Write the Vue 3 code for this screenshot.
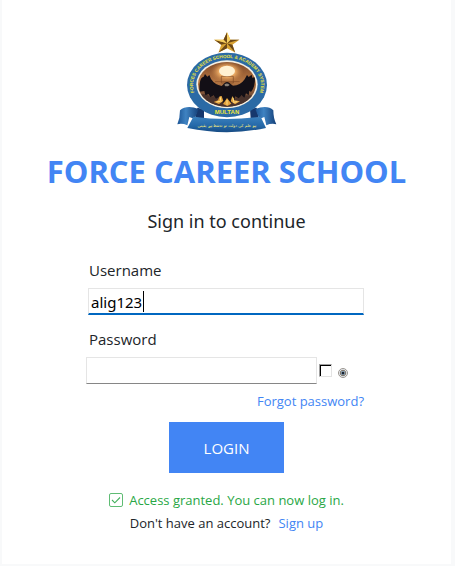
<script setup>
import { ref, watch, onMounted } from 'vue'

const username = ref('alig123')
const password = ref('')
const showPassword = ref(false)
const userInput = ref(null)
const caretX = ref(0)

// The caret sits right behind the typed text.
function placeCaret() {
  const style = getComputedStyle(userInput.value)
  const ctx = document.createElement('canvas').getContext('2d')
  ctx.font = `${style.fontSize} ${style.fontFamily}`
  caretX.value = Math.round(ctx.measureText(username.value).width) + 4
}

onMounted(placeCaret)
watch(username, placeCaret)
</script>

<template>
  <main class="page">
    <section class="card">
      <svg class="logo" viewBox="37 18 300 306" role="img" aria-label="Forces Career School crest">
        <defs>
          <linearGradient id="sky" x1="0" y1="0" x2="0" y2="1">
            <stop offset="0" stop-color="#7a4526" />
            <stop offset="0.45" stop-color="#b87843" />
            <stop offset="0.7" stop-color="#7d5238" />
            <stop offset="1" stop-color="#2a1a16" />
          </linearGradient>
          <radialGradient id="glow">
            <stop offset="0" stop-color="#fff3cf" />
            <stop offset="0.5" stop-color="#e9a862" />
            <stop offset="1" stop-color="#b87843" stop-opacity="0" />
          </radialGradient>
          <linearGradient id="ribbon" x1="0" y1="0" x2="0" y2="1">
            <stop offset="0" stop-color="#3b80bd" />
            <stop offset="0.6" stop-color="#2468a8" />
            <stop offset="1" stop-color="#174b83" />
          </linearGradient>
          <linearGradient id="curl" x1="0" y1="0" x2="1" y2="0">
            <stop offset="0" stop-color="#1c5596" />
            <stop offset="0.4" stop-color="#3f83c2" />
            <stop offset="1" stop-color="#143f78" />
          </linearGradient>
          <clipPath id="scene"><ellipse cx="187" cy="178" rx="87" ry="67" /></clipPath>
          <path id="arc" d="M90 205 A102 81 0 1 1 284 205" />
        </defs>
        <path d="M98 248 L118 253 L118 280 L92 278Z M276 248 L256 253 L258 280 L282 278Z" fill="#16376c" />
        <path d="M46 256 Q66 239 102 252 L90 282 L74 276 L68 301 Q52 294 38 298 Q46 280 46 256Z" fill="url(#curl)" />
        <path d="M326 256 Q308 239 272 252 L284 282 L299 276 L305 301 Q321 294 335 298 Q326 280 326 256Z" fill="url(#curl)" />
        <ellipse cx="187" cy="180" rx="120" ry="97" fill="#2b6aa5" />
        <ellipse cx="187" cy="178" rx="92" ry="72" fill="#f5efe2" />
        <g clip-path="url(#scene)">
          <rect x="98" y="108" width="178" height="140" fill="url(#sky)" />
          <ellipse cx="187" cy="140" rx="50" ry="33" fill="url(#glow)" />
          <path d="M170 154 H206 V174 H170Z M151 170 H225" fill="none" stroke="#7c4825" stroke-width="2" />
          <ellipse cx="187" cy="138" rx="24" ry="16" fill="#fff1d2" />
          <path d="M98 213 Q122 201 138 216 Q159 208 176 225 L206 224 Q238 204 278 215 V250 H98Z" fill="#4a332c" />
          <path d="M105 200 Q102 158 117 155 L121 147 L128 155 L134 150 L139 162 Q150 179 171 183 L180 174 Q189 167 198 177 L205 182 Q227 182 240 163 L247 150 L252 156 L261 149 L263 158 L271 156 Q272 186 259 201 L254 197 L252 211 L244 205 L239 218 L231 211 L222 220 L212 214 L207 232 L170 232 L164 215 L154 221 L147 211 L137 217 L132 207 L122 211 L119 198Z" fill="#130f16" />
          <path d="M179 179 Q187 172 195 180 L190 184 H182Z" fill="#8a8178" />
          <path d="M171 213 L176 228 L163 237 L147 231 L160 226 L165 214Z M203 213 L209 226 L226 229 L211 238 L198 229Z M181 228 L187 219 L194 228 L200 236 L188 243 L175 237Z" fill="#e4a33f" />
          <path d="M167 217 L169 231 M205 218 L207 230 M187 225 V239 M156 231 L166 229 M206 232 L218 230" stroke="#ffe28a" stroke-width="3" fill="none" />
        </g>
        <text class="motto"><textPath href="#arc" startOffset="50%" text-anchor="middle">FORCES CAREER SCHOOL &amp; ACADEMY SYSTEM</textPath></text>
        <text class="city" x="187" y="268" text-anchor="middle">MULTAN</text>
        <path d="M86 275 Q187 289 288 275 L304 309 Q187 334 68 309Z" fill="url(#ribbon)" />
        <text class="urdu" x="187" y="305" text-anchor="middle" direction="rtl">ہو علم کی دولت تو تحفظ ہے یقینی</text>
        <g transform="translate(187 22) scale(1.16 1.06) translate(-193 -23)">
          <path d="M193 23 L202 44 L225 44 L207 58 L214 80 L193 68 L171 80 L178 58 L160 44 L184 44Z" fill="#d9a334" />
          <path d="M193 23 V54 L184 44Z M160 44 L193 54 L178 58Z M171 80 L193 54 V68Z M214 80 L193 54 L207 58Z M225 44 L193 54 L202 44Z" fill="#6b4717" />
          <path d="M193 23 L202 44 L193 54Z M160 44 L184 44 L193 54Z" fill="#f6cf62" />
        </g>
      </svg>

      <h1 class="title">FORCE CAREER SCHOOL</h1>
      <p class="subtitle">Sign in to continue</p>

      <form class="form" @submit.prevent>
        <label class="label" for="username">Username</label>
        <div class="user-field">
          <input id="username" ref="userInput" v-model="username" class="input active" type="text" autocomplete="off" />
          <span class="caret" :style="{ left: caretX + 'px' }"></span>
        </div>

        <label class="label second" for="password">Password</label>
        <div class="password-row">
          <input id="password" v-model="password" class="input" :type="showPassword ? 'text' : 'password'" />
          <input id="show" v-model="showPassword" class="check" type="checkbox" />
          <label class="eye" for="show" aria-label="Show password">
            <svg viewBox="0 0 20 20" width="10" height="10" aria-hidden="true">
              <circle cx="10" cy="10" r="9" fill="#e9edf2" stroke="#9a958f" stroke-width="2" />
              <circle cx="10" cy="10" r="5.5" fill="#a9c3d8" stroke="#7d7263" stroke-width="2" />
              <circle cx="10" cy="10" r="3" fill="#17202e" />
            </svg>
          </label>
        </div>
        <a class="link forgot" href="#">Forgot password?</a>
        <button class="login" type="submit">LOGIN</button>
      </form>

      <p class="status">
        <svg viewBox="0 0 14 14" width="14" height="14" aria-hidden="true">
          <rect x="0.5" y="0.5" width="13" height="13" rx="1.5" fill="none" stroke="#5fbc74" />
          <path d="M3 7 L5.8 9.8 L11 4.5" fill="none" stroke="#45b05e" stroke-width="1.1" />
        </svg>
        <span>Access granted. You can now log in.</span>
      </p>
      <p class="signup">
        <span>Don't have an account?</span>
        <a class="link" href="#">Sign up</a>
      </p>
    </section>
  </main>
</template>

<style>
body {
  margin: 0;
  background: #f8f9fa;
}
</style>

<style scoped>
* {
  box-sizing: border-box;
}

.page {
  min-height: 100vh;
  display: flex;
  padding: 0 4px 2px 2px;
  font-family: "Open Sans", "Noto Sans", sans-serif;
  color: #212529;
}

.card {
  flex: 1;
  display: flex;
  flex-direction: column;
  align-items: center;
  padding-top: 31px;
  background: #fff;
}

.logo {
  width: 100px;
  height: 102px;
}

.motto,
.city {
  font-family: "Liberation Sans", sans-serif;
  font-weight: 700;
  fill: #f0e63a;
}

.motto {
  font-size: 14px;
}

.city {
  font-size: 18px;
}

.urdu {
  font-family: "DejaVu Sans", sans-serif;
  font-size: 12px;
  fill: #fff07a;
}

.title {
  margin: 16px 0 0;
  font-size: 31px;
  line-height: 44px;
  font-weight: 700;
  color: #4285f4;
  white-space: nowrap;
}

.subtitle {
  margin: 14px 0 0;
  font-family: "Noto Sans", sans-serif;
  font-size: 18px;
  line-height: 28px;
}

.form {
  display: flex;
  flex-direction: column;
  width: 281px;
  max-width: 100%;
  margin-top: 23px;
}

.label {
  padding-left: 3px;
  font-size: 15px;
  line-height: 24px;
}

.label.second {
  margin-top: 12px;
}

.user-field {
  position: relative;
  display: flex;
  margin: 6px 3px 0 2px;
}

.input {
  flex: 1;
  min-width: 0;
  height: 27px;
  padding: 1px 2px 0;
  border: 1px solid #e5e5e5;
  border-bottom-color: #868686;
  border-radius: 0;
  background: #fff;
  color: #000;
  font-family: "Noto Sans", sans-serif;
  font-size: 15px;
  outline: none;
}

.input.active {
  border-bottom: 2px solid #0067c0;
  caret-color: transparent;
}

.caret {
  position: absolute;
  top: 3px;
  width: 1px;
  height: 21px;
  background: #000;
}

.password-row {
  display: flex;
  align-items: center;
  margin-top: 6px;
  padding-right: 19px;
}

.check {
  appearance: none;
  width: 13px;
  height: 13px;
  margin: 0 6px 0 2px;
  border: 1px solid #e3e3e3;
  border-top-color: #a0a0a0;
  border-left-color: #a0a0a0;
  background: #fff;
  box-shadow: inset 1px 1px 0 #000;
}

.check:checked {
  background: #4285f4;
}

.eye {
  display: flex;
  padding-top: 4px;
}

.link {
  color: #4285f4;
  text-decoration: none;
}

.forgot {
  align-self: flex-end;
  margin: 7px 3px 0 0;
  font-size: 13px;
  line-height: 20px;
}

.login {
  align-self: center;
  margin-top: 11px;
  padding: 0 35px;
  height: 51px;
  border: 0;
  background: #4285f4;
  color: #fff;
  font-family: inherit;
  font-size: 15px;
}

.status,
.signup {
  display: flex;
  align-items: center;
  margin: 0;
  font-size: 13px;
  line-height: 20px;
}

.status {
  gap: 6px;
  margin-top: 17px;
  color: #28a745;
}

.signup {
  gap: 8px;
  margin-top: 3px;
}
</style>
